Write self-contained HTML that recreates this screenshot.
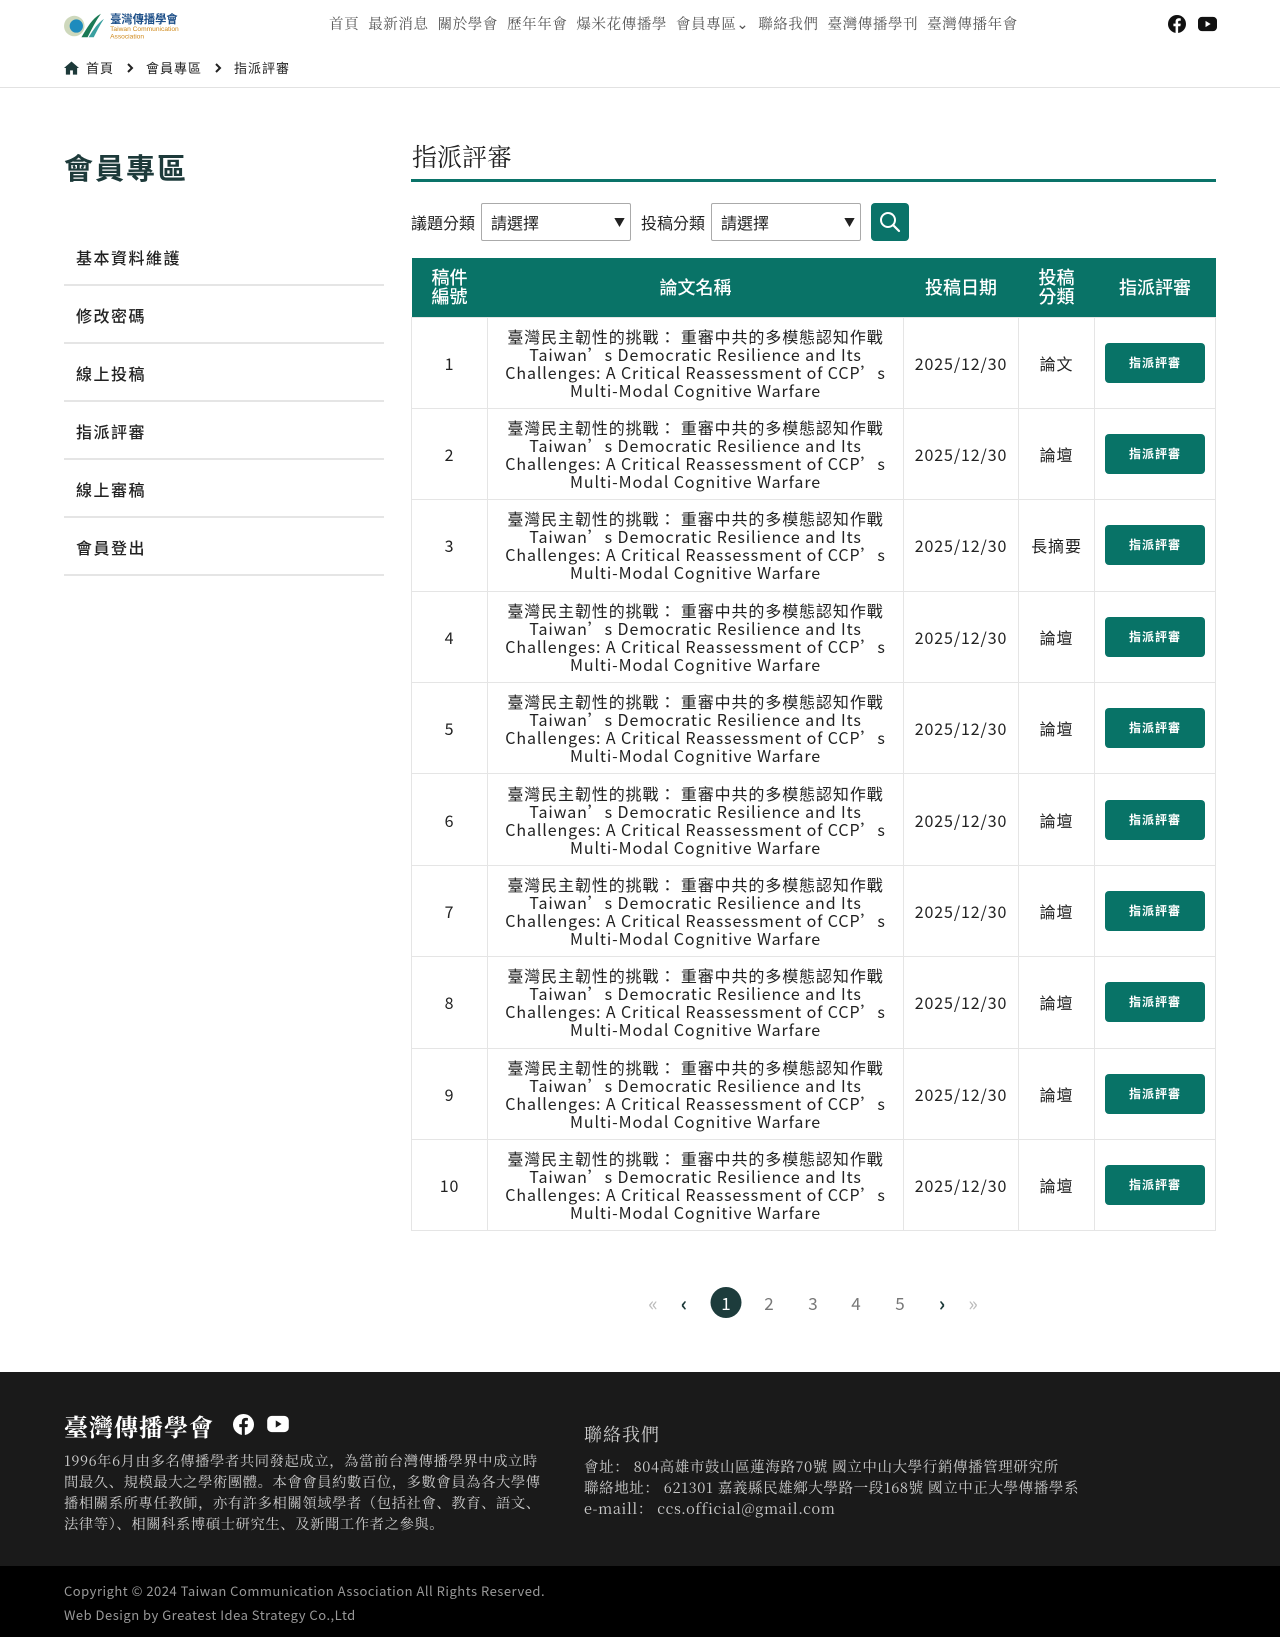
<!DOCTYPE html>
<html><head><meta charset="utf-8">
<style>
*{box-sizing:border-box;margin:0;padding:0}
body{width:1280px;height:1637px;position:relative;background:#fff;font-family:"Noto Sans CJK TC","Liberation Sans",sans-serif;color:#222;overflow:hidden}
.abs{position:absolute}
.nav{top:13px;left:329px;font-size:14.5px;color:#555;letter-spacing:0.6px;white-space:nowrap;font-family:"Liberation Serif","Noto Serif CJK SC",serif}
.nav span{margin-right:9px}
.bc{top:58px;left:64px;font-size:13px;color:#222;letter-spacing:1px;display:flex;align-items:center;white-space:nowrap}
.hr{top:87px;left:0;width:1280px;height:1px;background:#e2e2e2}
.side-title{left:64px;top:146px;font-size:29px;font-weight:700;color:#1d3a3a;letter-spacing:2px}
.side{left:64px;top:228px;width:320px}
.side div{height:58px;border-bottom:2px solid #e5e5e5;font-size:16px;line-height:58px;padding-left:12px;letter-spacing:1.5px;color:#222;font-weight:500}
h1.t{position:absolute;left:412px;top:138px;font-size:25px;font-weight:400;font-family:"Noto Serif CJK SC",serif;color:#222}
.ul{left:411px;top:179px;width:805px;height:3px;background:#0a7369}
.flt{top:203px;left:411px;display:flex;align-items:center;font-size:16px;white-space:nowrap}
.sel{width:150px;height:38px;border:1px solid #aaa;border-radius:2px;margin:0 10px 0 6px;position:relative;padding-left:9px;line-height:36px;font-size:16px}
.sel:after{content:"▼";position:absolute;right:5px;top:0;font-size:11px}
.btn{width:38px;height:38px;border-radius:4px;background:#0a7369;display:flex;align-items:center;justify-content:center}
table{position:absolute;left:411px;top:258px;width:805px;border-collapse:collapse}
th{background:#097367;color:#fff;font-weight:500;font-size:18px;height:59px;line-height:19px;border:none}
td{border:1px solid #e5e5e5;height:91.4px;text-align:center;font-size:16px;letter-spacing:0.9px;color:#222}
td.n{line-height:18px;padding:0 6px}
td .b{display:inline-block;width:100px;height:40px;line-height:40px;background:#087367;color:#fff;border-radius:4px;font-size:12px;letter-spacing:1px;font-weight:600}
.pg{top:1287px;left:0;width:1280px;height:32px;font-size:17px;color:#777}
.pg span{position:absolute;top:0;line-height:32px;transform:translateX(-50%)}
.foot{top:1372px;left:0;width:1280px;height:194px;background:#1a1a1a}
.bot{top:1566px;left:0;width:1280px;height:71px;background:#000}
.serif{font-family:"Noto Serif CJK SC","Liberation Serif",serif}
</style></head><body>
<svg class="abs" style="left:63px;top:10px" width="128" height="30" viewBox="0 0 125 28">
<circle cx="11" cy="15" r="10" fill="#b9c7a0" opacity=".7"/>
<circle cx="13" cy="15" r="6.5" fill="#1e8bbd"/>
<path d="M18 26 C24 16 28 8 37 3 C32 10 28 18 24 26Z" fill="#1a7a55"/>
<path d="M25 26 C30 18 34 12 40 8 C36 14 33 20 30 26Z" fill="#3aa0a0"/>
<text x="46" y="12" font-size="11" font-weight="700" fill="#1d4f88" font-family="Noto Sans CJK TC">臺灣傳播學會</text>
<text x="46" y="20" font-size="6.5" fill="#d08a1c" font-family="Liberation Sans">Taiwan Communication</text>
<text x="46" y="27" font-size="6.5" fill="#d08a1c" font-family="Liberation Sans">Association</text>
</svg>
<div class="abs nav"><span>首頁</span><span>最新消息</span><span>關於學會</span><span>歷年年會</span><span>爆米花傳播學</span><span>會員專區⌄</span><span>聯絡我們</span><span>臺灣傳播學刊</span><span>臺灣傳播年會</span></div>
<svg class="abs" style="left:1168px;top:15px" width="18" height="18" viewBox="0 0 24 24"><circle cx="12" cy="12" r="12" fill="#111"/><path d="M13.5 24V15h3l.5-3.5h-3.5V9.3c0-1 .3-1.7 1.8-1.7H17V4.5c-.4 0-1.4-.1-2.6-.1-2.6 0-4.3 1.6-4.3 4.4v2.7H7.2V15h2.9v9z" fill="#fff"/></svg>
<svg class="abs" style="left:1198px;top:16px" width="19" height="16" viewBox="0 0 24 20"><rect x="0" y="1" width="24" height="18" rx="5" fill="#111"/><path d="M9.5 6v8l6.5-4z" fill="#fff"/></svg>
<div class="abs bc"><svg width="15" height="14" viewBox="0 0 16 14"><path d="M8 0L0 7h2v7h4.5V9.5h3V14H14V7h2z" fill="#1d3a3a"/></svg><span style="margin-left:7px">首頁</span><svg style="margin:0 12px" width="8" height="10" viewBox="0 0 8 10"><path d="M2 1l4 4-4 4" fill="none" stroke="#222" stroke-width="2"/></svg><span>會員專區</span><svg style="margin:0 12px" width="8" height="10" viewBox="0 0 8 10"><path d="M2 1l4 4-4 4" fill="none" stroke="#222" stroke-width="2"/></svg><span>指派評審</span></div>
<div class="abs hr"></div>
<div class="abs side-title">會員專區</div>
<div class="abs side"><div>基本資料維護</div><div>修改密碼</div><div>線上投稿</div><div>指派評審</div><div>線上審稿</div><div>會員登出</div></div>
<h1 class="t">指派評審</h1>
<div class="abs ul"></div>
<div class="abs flt">議題分類<div class="sel">請選擇</div>投稿分類<div class="sel">請選擇</div><div class="btn"><svg width="24" height="24" viewBox="0 0 24 24"><circle cx="10" cy="10" r="7" fill="none" stroke="#fff" stroke-width="2"/><path d="M15 15l6 6" stroke="#fff" stroke-width="2.2" stroke-linecap="round"/></svg></div></div>
<table>
<tr><th style="width:76px">稿件<br>編號</th><th style="width:416px">論文名稱</th><th style="width:115px">投稿日期</th><th style="width:76px">投稿<br>分類</th><th>指派評審</th></tr>
<tr><td>1</td><td class="n">臺灣民主韌性的挑戰： 重審中共的多模態認知作戰<br>Taiwan’s Democratic Resilience and Its<br>Challenges: A Critical Reassessment of CCP’s<br>Multi-Modal Cognitive Warfare</td><td>2025/12/30</td><td>論文</td><td><span class="b">指派評審</span></td></tr>
<tr><td>2</td><td class="n">臺灣民主韌性的挑戰： 重審中共的多模態認知作戰<br>Taiwan’s Democratic Resilience and Its<br>Challenges: A Critical Reassessment of CCP’s<br>Multi-Modal Cognitive Warfare</td><td>2025/12/30</td><td>論壇</td><td><span class="b">指派評審</span></td></tr>
<tr><td>3</td><td class="n">臺灣民主韌性的挑戰： 重審中共的多模態認知作戰<br>Taiwan’s Democratic Resilience and Its<br>Challenges: A Critical Reassessment of CCP’s<br>Multi-Modal Cognitive Warfare</td><td>2025/12/30</td><td>長摘要</td><td><span class="b">指派評審</span></td></tr>
<tr><td>4</td><td class="n">臺灣民主韌性的挑戰： 重審中共的多模態認知作戰<br>Taiwan’s Democratic Resilience and Its<br>Challenges: A Critical Reassessment of CCP’s<br>Multi-Modal Cognitive Warfare</td><td>2025/12/30</td><td>論壇</td><td><span class="b">指派評審</span></td></tr>
<tr><td>5</td><td class="n">臺灣民主韌性的挑戰： 重審中共的多模態認知作戰<br>Taiwan’s Democratic Resilience and Its<br>Challenges: A Critical Reassessment of CCP’s<br>Multi-Modal Cognitive Warfare</td><td>2025/12/30</td><td>論壇</td><td><span class="b">指派評審</span></td></tr>
<tr><td>6</td><td class="n">臺灣民主韌性的挑戰： 重審中共的多模態認知作戰<br>Taiwan’s Democratic Resilience and Its<br>Challenges: A Critical Reassessment of CCP’s<br>Multi-Modal Cognitive Warfare</td><td>2025/12/30</td><td>論壇</td><td><span class="b">指派評審</span></td></tr>
<tr><td>7</td><td class="n">臺灣民主韌性的挑戰： 重審中共的多模態認知作戰<br>Taiwan’s Democratic Resilience and Its<br>Challenges: A Critical Reassessment of CCP’s<br>Multi-Modal Cognitive Warfare</td><td>2025/12/30</td><td>論壇</td><td><span class="b">指派評審</span></td></tr>
<tr><td>8</td><td class="n">臺灣民主韌性的挑戰： 重審中共的多模態認知作戰<br>Taiwan’s Democratic Resilience and Its<br>Challenges: A Critical Reassessment of CCP’s<br>Multi-Modal Cognitive Warfare</td><td>2025/12/30</td><td>論壇</td><td><span class="b">指派評審</span></td></tr>
<tr><td>9</td><td class="n">臺灣民主韌性的挑戰： 重審中共的多模態認知作戰<br>Taiwan’s Democratic Resilience and Its<br>Challenges: A Critical Reassessment of CCP’s<br>Multi-Modal Cognitive Warfare</td><td>2025/12/30</td><td>論壇</td><td><span class="b">指派評審</span></td></tr>
<tr><td>10</td><td class="n">臺灣民主韌性的挑戰： 重審中共的多模態認知作戰<br>Taiwan’s Democratic Resilience and Its<br>Challenges: A Critical Reassessment of CCP’s<br>Multi-Modal Cognitive Warfare</td><td>2025/12/30</td><td>論壇</td><td><span class="b">指派評審</span></td></tr>
</table>
<div class="abs pg">
<span style="left:653px;color:#bbb;font-size:20px">«</span>
<span style="left:684px;color:#1d3a3a;font-weight:700;font-size:20px">‹</span>
<span style="left:726px;width:31px;height:31px;border-radius:50%;background:#1d3c3c;color:#fff;text-align:center;line-height:31px">1</span>
<span style="left:769px">2</span><span style="left:813px">3</span><span style="left:856px">4</span><span style="left:900px">5</span>
<span style="left:942px;color:#1d3a3a;font-weight:700;font-size:20px">›</span>
<span style="left:973px;color:#bbb;font-size:20px">»</span>
</div>
<div class="abs foot">
<div class="abs serif" style="left:64px;top:36px;font-size:24px;font-weight:700;color:#fff;letter-spacing:1px">臺灣傳播學會</div>
<svg class="abs" style="left:233px;top:42px" width="21" height="21" viewBox="0 0 24 24"><circle cx="12" cy="12" r="12" fill="#fff"/><path d="M13.5 24V15h3l.5-3.5h-3.5V9.3c0-1 .3-1.7 1.8-1.7H17V4.5c-.4 0-1.4-.1-2.6-.1-2.6 0-4.3 1.6-4.3 4.4v2.7H7.2V15h2.9v9z" fill="#1a1a1a"/></svg>
<svg class="abs" style="left:267px;top:43px" width="22" height="18" viewBox="0 0 24 20"><rect x="0" y="1" width="24" height="18" rx="5" fill="#fff"/><path d="M9.5 6v8l6.5-4z" fill="#1a1a1a"/></svg>
<div class="abs serif" style="left:64px;top:79px;width:480px;font-size:14.3px;line-height:21px;color:#ccc;letter-spacing:.6px">1996年6月由多名傳播學者共同發起成立，為當前台灣傳播學界中成立時間最久、規模最大之學術團體。本會會員約數百位，多數會員為各大學傳播相關系所專任教師，亦有許多相關領域學者（包括社會、教育、語文、法律等）、相關科系博碩士研究生、及新聞工作者之參與。</div>
<div class="abs serif" style="left:584px;top:49px;font-size:18px;color:#ccc;letter-spacing:1px">聯絡我們</div>
<div class="abs serif" style="left:584px;top:84px;font-size:14.5px;line-height:21px;color:#ccc;letter-spacing:.6px;white-space:nowrap">會址： 804高雄市鼓山區蓮海路70號 國立中山大學行銷傳播管理研究所<br>聯絡地址： 621301 嘉義縣民雄鄉大學路一段168號 國立中正大學傳播學系<br>e-maill： ccs.official@gmail.com</div>
</div>
<div class="abs bot">
<div class="abs" style="left:64px;top:13px;font-size:13px;color:#999;letter-spacing:.5px;line-height:24px">Copyright © 2024 Taiwan Communication Association All Rights Reserved.<br>Web Design by Greatest Idea Strategy Co.,Ltd</div>
</div>
</body></html>
